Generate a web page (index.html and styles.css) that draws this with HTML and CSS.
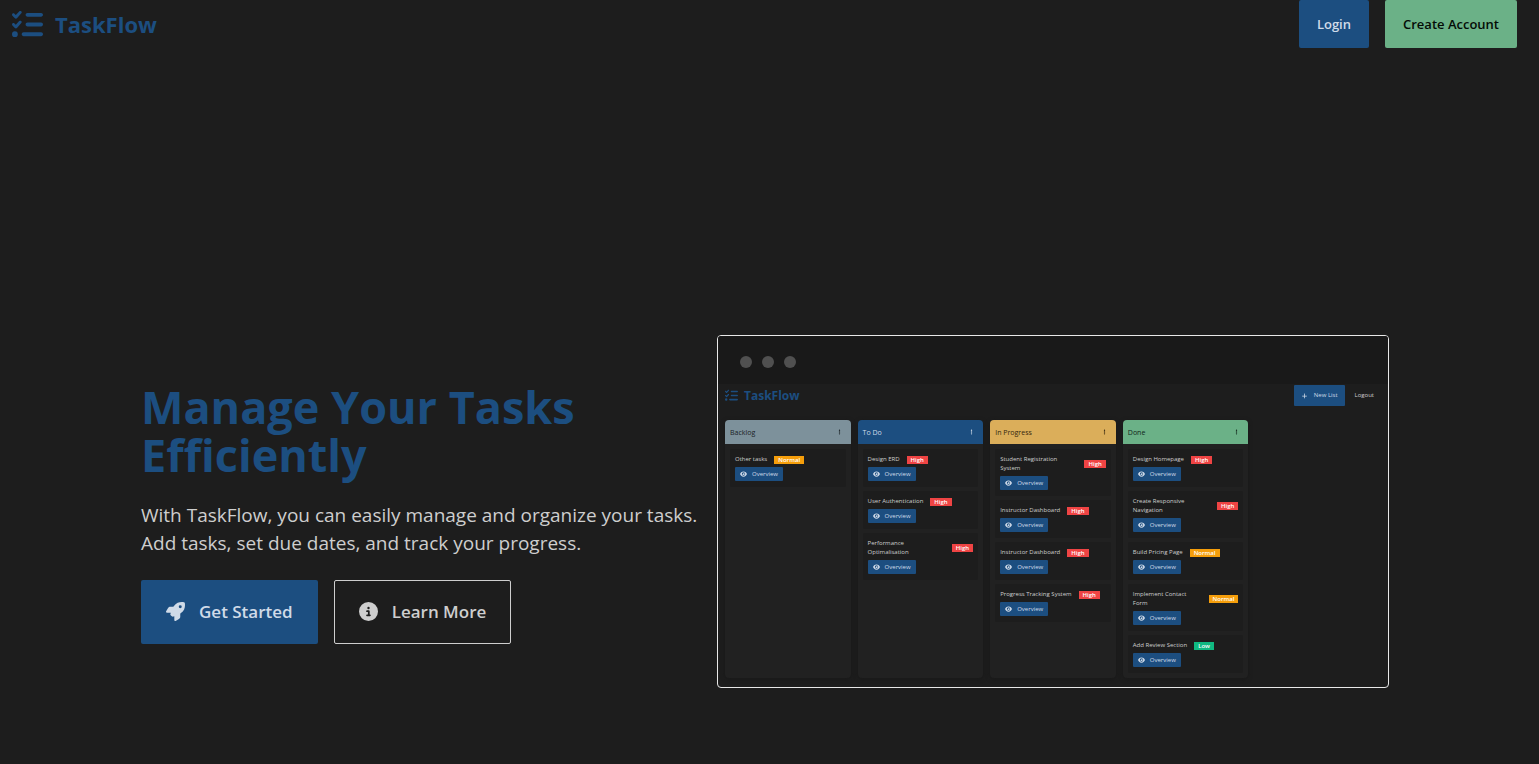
FILE: index.html
```html
<!DOCTYPE html>
<html lang="en">
<head>
<meta charset="utf-8">
<meta name="viewport" content="width=device-width, initial-scale=1">
<title>TaskFlow</title>
<link rel="stylesheet" href="styles.css">
</head>
<body>
<svg class="sprite" aria-hidden="true">
  <symbol id="list-check" viewBox="0 0 512 512"><path d="M152.1 38.2c9.9 8.900 10.7 24 1.800 33.900l-72 80c-4.400 4.900-10.600 7.800-17.200 7.900s-12.900-2.400-17.600-7L7 113C-2.300 103.600-2.300 88.400 7 79s24.600-9.400 33.900 0l22.100 22.100 55.100-61.200c8.900-9.900 24-10.700 33.900-1.800zm0 160c9.900 8.900 10.700 24 1.800 33.900l-72 80c-4.400 4.900-10.600 7.800-17.200 7.900s-12.900-2.400-17.600-7L7 273c-9.400-9.400-9.400-24.600 0-33.900s24.600-9.400 33.900 0l22.100 22.100 55.100-61.200c8.900-9.900 24-10.700 33.900-1.800zM224 96c0-17.700 14.300-32 32-32H480c17.700 0 32 14.300 32 32s-14.300 32-32 32H256c-17.700 0-32-14.300-32-32zm0 160c0-17.700 14.300-32 32-32H480c17.700 0 32 14.300 32 32s-14.300 32-32 32H256c-17.700 0-32-14.300-32-32zM160 416c0-17.700 14.300-32 32-32H480c17.700 0 32 14.300 32 32s-14.300 32-32 32H192c-17.700 0-32-14.300-32-32zM48 368a48 48 0 1 1 0 96 48 48 0 1 1 0-96z"/></symbol>
  <symbol id="rocket" viewBox="0 0 512 512"><path d="M156.6 384.9L125.7 354c-8.5-8.5-11.5-20.8-7.7-32.2c3-8.9 7-20.5 11.8-33.8L24 288c-8.6 0-16.6-4.6-20.900-12.1s-4.200-16.700 .2-24.100l52.500-88.500c13-21.900 36.500-35.300 61.900-35.300l82.300 0c2.400-4 4.800-7.700 7.200-11.300C289.100-4.100 411.100-8.100 483.900 5.300c11.600 2.100 20.600 11.200 22.800 22.800c13.400 72.900 9.300 194.800-111.400 276.700c-3.500 2.400-7.300 4.800-11.300 7.200v82.300c0 25.400-13.400 49-35.300 61.900l-88.500 52.500c-7.400 4.400-16.600 4.500-24.100 .2s-12.100-12.200-12.100-20.900V380.800c-14.100 4.900-26.400 8.900-35.700 11.900c-11.200 3.600-23.400 .5-31.800-7.800zM384 168a40 40 0 1 0 0-80 40 40 0 1 0 0 80z"/></symbol>
  <symbol id="info" viewBox="0 0 512 512"><path d="M256 512A256 256 0 1 0 256 0a256 256 0 1 0 0 512zM216 336h24V272H216c-13.300 0-24-10.700-24-24s10.700-24 24-24h48c13.300 0 24 10.700 24 24v88h8c13.300 0 24 10.700 24 24s-10.700 24-24 24H216c-13.300 0-24-10.700-24-24s10.700-24 24-24zm40-208a32 32 0 1 1 0 64 32 32 0 1 1 0-64z"/></symbol>
  <symbol id="eye" viewBox="0 0 576 512"><path d="M288 32c-80.800 0-145.500 36.800-192.600 80.600C48.600 156 17.300 208 2.500 243.700c-3.300 7.900-3.300 16.700 0 24.600C17.300 304 48.600 356 95.400 399.400C142.500 443.200 207.200 480 288 480s145.500-36.800 192.600-80.600c46.800-43.500 78.100-95.400 93-131.100c3.300-7.900 3.300-16.700 0-24.600c-14.900-35.700-46.200-87.700-93-131.100C433.500 68.800 368.800 32 288 32zM144 256a144 144 0 1 1 288 0 144 144 0 1 1 -288 0zm144-64c0 35.300-28.700 64-64 64c-7.100 0-13.900-1.200-20.300-3.300c-5.500-1.800-11.900 1.600-11.700 7.400c.3 6.900 1.300 13.800 3.200 20.700c13.700 51.200 66.400 81.600 117.600 67.900s81.600-66.400 67.900-117.600c-11.100-41.500-47.800-69.400-88.600-71.100c-5.800-.2-9.200 6.100-7.400 11.700c2.100 6.400 3.300 13.200 3.300 20.300z"/></symbol>
  <symbol id="plus" viewBox="0 0 448 512"><path d="M256 80c0-17.700-14.300-32-32-32s-32 14.300-32 32V224H48c-17.700 0-32 14.300-32 32s14.300 32 32 32H192V432c0 17.700 14.300 32 32 32s32-14.300 32-32V288H400c17.700 0 32-14.300 32-32s-14.300-32-32-32H256V80z"/></symbol>
  <symbol id="dots" viewBox="0 0 128 512"><circle cx="64" cy="104" r="56"/><circle cx="64" cy="256" r="56"/><circle cx="64" cy="408" r="56"/></symbol>
</svg>

<header class="navbar">
  <a class="brand" href="#"><svg class="brand-icon"><use href="#list-check"/></svg>TaskFlow</a>
  <nav class="nav-actions">
    <a class="btn btn-primary" href="#">Login</a>
    <a class="btn btn-accent" href="#">Create Account</a>
  </nav>
</header>

<main class="hero">
  <section class="intro">
    <h1 class="title">Manage Your Tasks<br>Efficiently</h1>
    <p class="lead">With TaskFlow, you can easily manage and organize your tasks. Add tasks, set due dates, and track your progress.</p>
    <div class="actions">
      <a class="btn btn-large btn-primary" href="#"><svg class="btn-icon"><use href="#rocket"/></svg>Get Started</a>
      <a class="btn btn-large btn-outline" href="#"><svg class="btn-icon"><use href="#info"/></svg>Learn More</a>
    </div>
  </section>

  <section class="window" aria-label="Board preview">
    <div class="window-bar"><span class="dot"></span><span class="dot"></span><span class="dot"></span></div>
    <div class="preview">
      <div class="preview-nav">
        <a class="preview-brand" href="#"><svg class="preview-brand-icon"><use href="#list-check"/></svg>TaskFlow</a>
        <div class="preview-actions">
          <button class="new-list" type="button"><svg class="mini-icon"><use href="#plus"/></svg>New List</button>
          <button class="logout" type="button">Logout</button>
        </div>
      </div>
      <div class="board">
        <section class="column">
          <header class="column-head backlog"><h2 class="column-title">Backlog</h2><button class="menu" type="button" aria-label="Backlog menu"><svg class="menu-icon"><use href="#dots"/></svg></button></header>
          <div class="cards">
            <article class="card"><div class="card-head"><h3 class="card-title">Other tasks</h3><span class="badge normal">Normal</span></div><button class="overview" type="button"><svg class="mini-icon"><use href="#eye"/></svg>Overview</button></article>
          </div>
        </section>
        <section class="column">
          <header class="column-head todo"><h2 class="column-title">To Do</h2><button class="menu" type="button" aria-label="To Do menu"><svg class="menu-icon"><use href="#dots"/></svg></button></header>
          <div class="cards">
            <article class="card"><div class="card-head"><h3 class="card-title">Design ERD</h3><span class="badge high">High</span></div><button class="overview" type="button"><svg class="mini-icon"><use href="#eye"/></svg>Overview</button></article>
            <article class="card"><div class="card-head"><h3 class="card-title">User Authentication</h3><span class="badge high">High</span></div><button class="overview" type="button"><svg class="mini-icon"><use href="#eye"/></svg>Overview</button></article>
            <article class="card"><div class="card-head wrap"><h3 class="card-title">Performance<br>Optimalisation</h3><span class="badge high">High</span></div><button class="overview" type="button"><svg class="mini-icon"><use href="#eye"/></svg>Overview</button></article>
          </div>
        </section>
        <section class="column">
          <header class="column-head progress"><h2 class="column-title">In Progress</h2><button class="menu" type="button" aria-label="In Progress menu"><svg class="menu-icon"><use href="#dots"/></svg></button></header>
          <div class="cards">
            <article class="card"><div class="card-head wrap"><h3 class="card-title">Student Registration<br>System</h3><span class="badge high">High</span></div><button class="overview" type="button"><svg class="mini-icon"><use href="#eye"/></svg>Overview</button></article>
            <article class="card"><div class="card-head"><h3 class="card-title">Instructor Dashboard</h3><span class="badge high">High</span></div><button class="overview" type="button"><svg class="mini-icon"><use href="#eye"/></svg>Overview</button></article>
            <article class="card"><div class="card-head"><h3 class="card-title">Instructor Dashboard</h3><span class="badge high">High</span></div><button class="overview" type="button"><svg class="mini-icon"><use href="#eye"/></svg>Overview</button></article>
            <article class="card"><div class="card-head"><h3 class="card-title">Progress Tracking System</h3><span class="badge high">High</span></div><button class="overview" type="button"><svg class="mini-icon"><use href="#eye"/></svg>Overview</button></article>
          </div>
        </section>
        <section class="column">
          <header class="column-head done"><h2 class="column-title">Done</h2><button class="menu" type="button" aria-label="Done menu"><svg class="menu-icon"><use href="#dots"/></svg></button></header>
          <div class="cards">
            <article class="card"><div class="card-head"><h3 class="card-title">Design Homepage</h3><span class="badge high">High</span></div><button class="overview" type="button"><svg class="mini-icon"><use href="#eye"/></svg>Overview</button></article>
            <article class="card"><div class="card-head wrap"><h3 class="card-title">Create Responsive<br>Navigation</h3><span class="badge high">High</span></div><button class="overview" type="button"><svg class="mini-icon"><use href="#eye"/></svg>Overview</button></article>
            <article class="card"><div class="card-head"><h3 class="card-title">Build Pricing Page</h3><span class="badge normal">Normal</span></div><button class="overview" type="button"><svg class="mini-icon"><use href="#eye"/></svg>Overview</button></article>
            <article class="card"><div class="card-head wrap"><h3 class="card-title">Implement Contact<br>Form</h3><span class="badge normal">Normal</span></div><button class="overview" type="button"><svg class="mini-icon"><use href="#eye"/></svg>Overview</button></article>
            <article class="card"><div class="card-head"><h3 class="card-title">Add Review Section</h3><span class="badge low">Low</span></div><button class="overview" type="button"><svg class="mini-icon"><use href="#eye"/></svg>Overview</button></article>
          </div>
        </section>
      </div>
    </div>
  </section>
</main>
</body>
</html>
```

FILE: styles.css
```css
* { box-sizing: border-box; }

body {
  margin: 0;
  background: #1d1d1d;
  color: #cecece;
  font-family: "Open Sans", "Noto Sans", sans-serif;
}

h1, h2, h3, p { margin: 0; }
a { color: inherit; text-decoration: none; }
button { border: 0; padding: 0; background: none; color: inherit; font: inherit; cursor: pointer; }
svg { display: block; flex: none; fill: currentColor; }
.sprite { position: absolute; width: 0; height: 0; }

.navbar {
  display: flex;
  justify-content: space-between;
  align-items: center;
  padding: 0 22px 0 12px;
}
.brand {
  display: flex;
  align-items: center;
  gap: 12px;
  color: #1c4e80;
  font-size: 22px;
  font-weight: 700;
}
.brand-icon { width: 31px; height: 31px; }
.nav-actions { display: flex; gap: 16px; }

.btn {
  display: inline-flex;
  align-items: center;
  justify-content: center;
  height: 48px;
  padding: 0 17px;
  border: 1px solid transparent;
  border-radius: 2px;
  font-size: 13px;
  font-weight: 600;
  white-space: nowrap;
}
.btn-primary { background: #1c4e80; color: #d0dbe8; }
.btn-accent { background: #6bb187; color: #040b06; }
.btn-outline { border-color: #cecece; }
.btn-large { height: 64px; padding: 0 24px; gap: 14px; font-size: 17px; }
.btn-icon { width: 19px; height: 19px; }

.hero {
  display: flex;
  justify-content: center;
  align-items: center;
  gap: 16px;
  padding: 287px 25px 76px 16px;
}
.intro { flex: 0 1 560px; }
.title {
  padding-top: 3px;
  color: #1c4e80;
  font-size: 45px;
  line-height: 48px;
  font-weight: 700;
}
.lead { padding: 22px 0 23px; font-size: 19px; line-height: 28px; }
.actions { display: flex; gap: 16px; }

.window {
  flex: 0 1 672px;
  overflow: hidden;
  border: 1px solid #e8e8e8;
  border-radius: 4px;
}
.window-bar {
  display: flex;
  align-items: center;
  gap: 10px;
  height: 48px;
  padding: 4px 22px 0;
  background: #191919;
}
.dot { width: 12px; height: 12px; border-radius: 50%; background: #505050; }

.preview { padding: 0 7px 9px; font-size: 6px; font-weight: 500; line-height: 9px; }
.preview-nav {
  display: flex;
  justify-content: space-between;
  align-items: center;
  padding: 1px 7px 14px 0;
}
.preview-brand {
  display: flex;
  align-items: center;
  gap: 6px;
  color: #1c4e80;
  font-size: 12px;
  line-height: 21px;
  font-weight: 700;
}
.preview-brand-icon { width: 13px; height: 13px; }
.preview-actions { display: flex; align-items: center; gap: 10px; }
.new-list {
  display: flex;
  align-items: center;
  gap: 6px;
  height: 21px;
  padding: 0 7px;
  border-radius: 1px;
  background: #1c4e80;
  color: #d0dbe8;
}
.mini-icon { width: 7px; height: 6px; }

.board { display: grid; grid-template-columns: repeat(5, 1fr); gap: 7px; }
.column { border-radius: 4px; background: #212121; box-shadow: 0 1px 4px #181818; }
.column-head {
  display: flex;
  justify-content: space-between;
  align-items: center;
  height: 24px;
  padding: 0 10px 0 5px;
  border-radius: 4px 4px 0 0;
}
.backlog { background: #7d919b; color: #1a2226; }
.todo { background: #1c4e80; color: #d0dbe8; }
.progress { background: #dbae5a; color: #33260f; }
.done { background: #6bb187; color: #10261a; }
.column-title { font-size: 7px; font-weight: 500; }
.menu-icon { width: 3px; height: 6px; }

.cards { display: flex; flex-direction: column; gap: 4px; padding: 5px; }
.card { padding: 6px 5px; border-radius: 2px; background: #1d1d1d; }
.card-head { display: flex; align-items: center; gap: 7px; margin-bottom: 3px; white-space: nowrap; }
.wrap { justify-content: space-between; }
.card-title { font-size: 6px; font-weight: 500; }
.badge { padding: 0 4px; color: #fff; font-weight: 600; line-height: 8px; }
.high { background: #ef4444; }
.normal { background: #f59e0b; }
.low { background: #10b981; }
.overview {
  display: inline-flex;
  align-items: center;
  gap: 5px;
  height: 14px;
  padding: 0 5px;
  border-radius: 1px;
  background: #1c4e80;
  color: #d0dbe8;
  vertical-align: top;
}
```
